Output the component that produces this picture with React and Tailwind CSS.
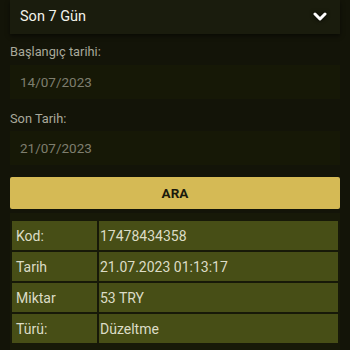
import React from 'react';

const rows = [
  { label: 'Kod:', value: '17478434358' },
  { label: 'Tarih', value: '21.07.2023 01:13:17' },
  { label: 'Miktar', value: '53 TRY' },
  { label: 'Türü:', value: 'Düzeltme' },
];

const App = () => {
  return (
    <div
      className="w-[350px] h-[350px] overflow-hidden bg-[#131408] px-[10px]"
      style={{ fontFamily: 'Roboto, "Noto Sans", sans-serif' }}
    >
      {/* Period select */}
      <div className="h-[34px] flex items-center justify-between pl-[10px] pr-[12px] bg-[#1a1c0d] shadow-[0_2px_4px_rgba(0,0,0,0.5)]">
        <span className="text-[14.5px] leading-[18px] text-[#f2f2ea]">Son 7 Gün</span>
        <svg width="16" height="12" viewBox="0 0 16 12" className="drop-shadow-[0_0_2px_rgba(0,0,0,0.9)]">
          <polyline points="3,3 8,8 13,3" fill="none" stroke="#ffffff" strokeWidth="3" strokeLinecap="round" strokeLinejoin="round" />
        </svg>
      </div>

      {/* Dates */}
      <div className="mt-[9px] h-[18px] leading-[18px] text-[12.8px] text-[#a9a99b]">Başlangıç tarihi:</div>
      <div className="mt-[4px] h-[34px] flex items-center pl-[10px] bg-[#161806] text-[13.5px] leading-[18px] text-[#7e7e6e]">
        14/07/2023
      </div>

      <div className="mt-[11px] h-[18px] leading-[18px] text-[12.8px] text-[#a9a99b]">Son Tarih:</div>
      <div className="mt-[3px] h-[34px] flex items-center pl-[10px] bg-[#161806] text-[13.5px] leading-[18px] text-[#7e7e6e]">
        21/07/2023
      </div>

      <button className="mt-[12px] w-full h-[32px] rounded-[2px] bg-[#d5ba55] text-[13.5px] leading-[18px] font-bold text-[#1b1a0c] flex items-center justify-center">
        ARA
      </button>

      {/* Result table */}
      <div className="mt-[4px] bg-[#171908] px-[1px] pt-[7px] pb-[6px]">
        <div className="grid grid-cols-[85px_1fr] gap-[2px] bg-[#171908] p-[1px]">
          {rows.map((row) => (
            <React.Fragment key={row.label}>
              <div className="h-[29px] flex items-center pl-[4px] bg-[#474e16] text-[14px] leading-[18px] text-[#dcdcc6]">
                {row.label}
              </div>
              <div className="h-[29px] flex items-center pl-[1px] bg-[#474e16] text-[14px] leading-[18px] text-[#dcdcc6]">
                {row.value}
              </div>
            </React.Fragment>
          ))}
        </div>
      </div>
    </div>
  );
};

export default App;
